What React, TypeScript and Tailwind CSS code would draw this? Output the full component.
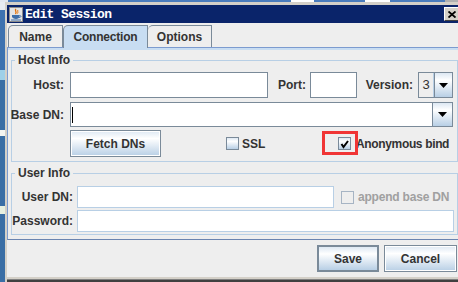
import React from 'react';

const gradient = 'bg-[linear-gradient(to_bottom,#dde8f3_0%,#ffffff_30%,#b8cfe5_100%)]';

function DownArrow() {
  return (
    <svg width="9" height="5" viewBox="0 0 9 5">
      <path d="M0 0 H9 L4.5 5 Z" fill="#000" />
    </svg>
  );
}

function Check({ checked, disabled }: { checked?: boolean; disabled?: boolean }) {
  if (disabled) {
    return <span className="block w-[13px] h-[13px] shrink-0 border border-[#a6b4c4] bg-[#eeeeee]" />;
  }
  return (
    <span className={`w-[13px] h-[13px] shrink-0 border border-[#7a8a99] flex items-center justify-center ${gradient}`}>
      {checked && (
        <svg width="11" height="11" viewBox="0 0 11 11">
          <path d="M2.5 6 L4.5 9 L9 3" stroke="#000" strokeWidth="2" fill="none" />
        </svg>
      )}
    </span>
  );
}

function Label({ w, children }: { w: string; children: React.ReactNode }) {
  return <div className={`${w} shrink-0 flex justify-end whitespace-nowrap`}>{children}</div>;
}

function JavaIcon() {
  return (
    <svg width="14" height="15" viewBox="0 0 14 15">
      <rect x="0.5" y="0.5" width="13" height="14" fill="#e4e4e4" stroke="#8c8c8c" />
      <path d="M7 2 C5 3.5 8.5 4.5 6.5 7" stroke="#e76f00" strokeWidth="1.3" fill="none" />
      <path d="M9 3 C8 4 9.5 5 8.5 6.5" stroke="#e76f00" strokeWidth="1" fill="none" />
      <path d="M3 8 H10.5 V9.5 C10.5 11 9 12 7 12 C5 12 3 11 3 9.5 Z" fill="#3f6ea8" />
      <path d="M10.5 8.5 C12.5 8.5 12.5 10.5 10 10.5" stroke="#3f6ea8" strokeWidth="1" fill="none" />
      <path d="M2 13 H12" stroke="#3f6ea8" strokeWidth="1" />
    </svg>
  );
}

export default function App() {
  return (
    <div className="w-[458px] h-[282px] overflow-hidden bg-[#3a6ea5] flex flex-col font-['Liberation_Sans',Arial,sans-serif] text-[12px] font-bold text-[#333333]">
      {/* desktop strip above window */}
      <div className="h-[2px] flex shrink-0">
        <div className="w-[8px] bg-[#e4e8ef]" />
        <div className="w-[283px] bg-[#4a7cbc]" />
        <div className="w-[23px] bg-white" />
        <div className="w-[51px] bg-[#4a7cbc]" />
        <div className="w-[25px] bg-white" />
        <div className="w-[55px] bg-[#4a7cbc]" />
        <div className="flex-1 bg-[#b0b0b0]" />
      </div>
      <div className="flex flex-1 min-h-0">
        <div className="w-[5px] shrink-0 flex flex-col">
          <div className="h-[8px] bg-[#e8ecf2]" />
          <div className="h-[60px] bg-[#3d72b0]" />
          <div className="h-[10px] bg-[#9fd0e8]" />
          <div className="h-[50px] bg-[#3a6ea5]" />
          <div className="h-[6px] bg-[#f4f4f0]" />
          <div className="h-[70px] bg-[#3a6ea5]" />
          <div className="h-[8px] bg-[#e8f0e0]" />
          <div className="flex-1 bg-[#3a6ea5]" />
        </div>
        <div className="w-[455px] shrink-0 flex flex-col border-l-2 border-t-[3px] border-[#d4d0c8] bg-[#d4d0c8]">
          {/* title bar */}
          <div className="h-[18px] shrink-0 bg-[#0a246a] flex items-center">
            <div className="ml-[2px]"><JavaIcon /></div>
            <span className="ml-[2px] text-white font-['Liberation_Mono',monospace] text-[13px] tracking-[-0.6px] font-bold leading-none">Edit Session</span>
            <div className="ml-auto w-[16px] h-[14px] bg-[#d4d0c8] border-t border-l border-t-white border-l-white border-b border-r border-b-[#404040] border-r-[#404040] flex items-center justify-center">
              <svg width="8" height="7" viewBox="0 0 8 7">
                <path d="M0.5 0.5 L7.5 6.5 M7.5 0.5 L0.5 6.5" stroke="#000" strokeWidth="1.8" />
              </svg>
            </div>
          </div>

          {/* body */}
          <div className="h-[254px] shrink-0 bg-[#eeeeee] flex flex-col pt-[2px]">
            {/* tabs */}
            <div className="h-[22px] flex items-end pl-[1px]">
              <div className="w-[55px] h-[22px] border-t border-l border-r border-[#7a8a99] rounded-tl-[5px] flex items-center justify-center">Name</div>
              <div className="w-[85px] h-[23px] mb-[-1px] relative z-10 bg-[#c8ddf2] border-t border-l border-r border-[#7a8a99] rounded-tl-[5px] flex items-center justify-center pb-[1px] tracking-[-0.2px]">Connection</div>
              <div className="w-[64px] h-[22px] border-t border-r border-[#7a8a99] rounded-tl-[5px] flex items-center justify-center">Options</div>
            </div>

            {/* tab panel */}
            <div className="border-t border-l border-[#7c9bcf] border-b border-b-[#6a84b0] pb-[4px]">
              <div className="h-[2px] bg-[#c8ddf2]" />
              <div className="pl-[3px]">
                <fieldset className="mt-[3px] w-[447px] border border-[#b8cfe5] pb-[4px]">
                  <legend className="ml-[3px] px-[3px] leading-[14px]">Host Info</legend>
                  <div className="mt-[5px] h-[26px] flex items-center">
                    <Label w="w-[52px]">Host:</Label>
                    <div className="ml-[6px] w-[198px] h-full border border-[#7a8a99] bg-white" />
                    <Label w="w-[38px]">Port:</Label>
                    <div className="ml-[4px] w-[47px] h-full border border-[#7a8a99] bg-white" />
                    <Label w="w-[56px]">Version:</Label>
                    <div className="ml-[5px] w-[35px] h-full border border-[#7a8a99] flex">
                      <div className="w-[15px] bg-[#eeeeee] border-r border-[#b8cfe5] flex items-center justify-center font-normal text-[13px] text-[#333]">3</div>
                      <div className={`flex-1 border-l border-[#7a8a99] flex items-center justify-center ${gradient}`}>
                        <DownArrow />
                      </div>
                    </div>
                  </div>
                  <div className="mt-[4px] h-[25px] flex items-center">
                    <Label w="w-[52px]">Base DN:</Label>
                    <div className="ml-[6px] w-[383px] h-full border border-[#7a8a99] flex">
                      <div className="flex-1 bg-white flex items-center">
                        <span className="ml-[1px] w-px h-[16px] bg-black" />
                      </div>
                      <div className={`w-[20px] border-l border-[#7a8a99] flex items-center justify-center ${gradient}`}>
                        <DownArrow />
                      </div>
                    </div>
                  </div>
                  <div className="mt-[3px] h-[27px] flex items-center relative">
                    <div className="w-[58px] shrink-0" />
                    <button className={`w-[91px] h-[27px] border border-[#7a8a99] shadow-[inset_0_0_0_1px_#ffffff] ${gradient}`}>Fetch DNs</button>
                    <div className="ml-[65px] w-[112px] flex items-center">
                      <Check />
                      <span className="ml-[3px]">SSL</span>
                    </div>
                    <div className="flex items-center">
                      <Check checked />
                      <span className="ml-[5px] whitespace-nowrap tracking-[-0.35px]">Anonymous bind</span>
                    </div>
                    <div className="absolute left-[310px] top-[1px] w-[36px] h-[24px] border-[3px] border-[#f03535]" />
                  </div>
                </fieldset>

                <fieldset className="mt-[4px] w-[447px] border border-[#b8cfe5] pb-[2px]">
                  <legend className="ml-[3px] px-[3px] leading-[14px]">User Info</legend>
                  <div className="mt-[6px] h-[22px] flex items-center">
                    <Label w="w-[61px]">User DN:</Label>
                    <div className="ml-[4px] w-[257px] h-full border border-[#b8cfe5] bg-white" />
                    <div className="ml-[7px]"><Check disabled /></div>
                    <span className="ml-[4px] text-[#a0a0a0] whitespace-nowrap tracking-[-0.2px]">append base DN</span>
                  </div>
                  <div className="mt-[2px] h-[22px] flex items-center">
                    <Label w="w-[61px]">Password:</Label>
                    <div className="ml-[4px] w-[377px] h-full border border-[#b8cfe5] bg-white" />
                  </div>
                </fieldset>
              </div>
            </div>

            {/* buttons */}
            <div className="pt-[5px] pl-[310px] flex gap-[5px]">
              <button className={`w-[62px] h-[27px] border-2 border-[#7a8a99] ${gradient}`}>Save</button>
              <button className={`w-[73px] h-[27px] border border-[#7a8a99] shadow-[inset_0_0_0_1px_#ffffff] ${gradient}`}>Cancel</button>
            </div>
          </div>

          {/* bottom frame */}
          <div className="h-[2px] bg-[#d4d0c8]" />
          <div className="h-[1px] bg-[#808080]" />
          <div className="h-[2px] bg-[#404040]" />
        </div>
      </div>
    </div>
  );
}
